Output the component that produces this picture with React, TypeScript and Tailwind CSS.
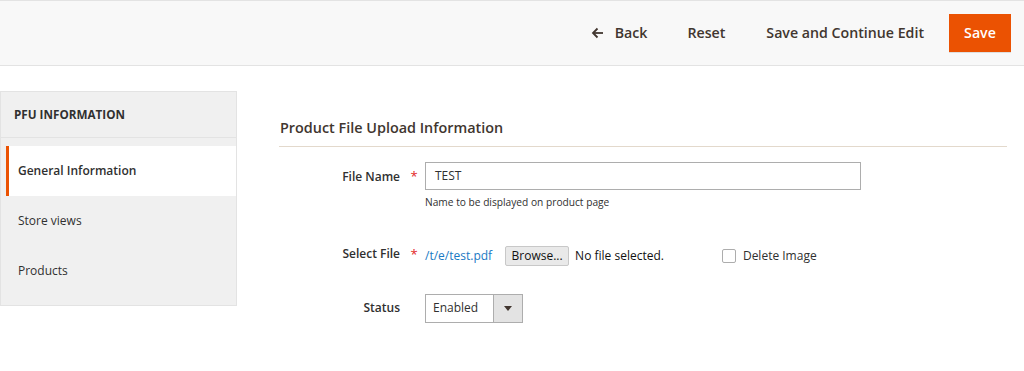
import React from "react";

export default function App() {
  return (
    <div className="w-[1024px] h-[371px] bg-white overflow-hidden text-[#303030]" style={{ fontFamily: '"Open Sans", "Liberation Sans", sans-serif' }}>
      {/* Header */}
      <div className="h-[66px] bg-[#f8f8f8] border-t border-b border-[#e3e3e3] flex items-center justify-end pr-[13px]">
        <button className="flex items-center gap-[11px] text-[14.2px] font-semibold text-[#41362f] mr-[40px]">
          <svg width="13" height="12" viewBox="0 0 13 12" fill="none" stroke="#41362f" strokeWidth="1.8">
            <path d="M12 6H2" />
            <path d="M6.5 1.5L2 6l4.5 4.5" />
          </svg>
          <span>Back</span>
        </button>
        <button className="text-[14.2px] font-semibold text-[#41362f] mr-[41px]">Reset</button>
        <button className="text-[14.2px] font-semibold text-[#41362f] mr-[25px]">Save and Continue Edit</button>
        <button className="h-[38px] w-[62px] bg-[#eb5202] text-white text-[14.2px] font-semibold shadow-[0_1px_0_rgba(0,0,0,0.1)]">Save</button>
      </div>

      <div className="flex items-start pt-[25px]">
        {/* Sidebar */}
        <div className="w-[237px] shrink-0 bg-[#f0f0f0] border border-[#e3e3e3] pb-[10px]">
          <div className="h-[46px] flex items-center pl-[13px] border-b border-[#e3e3e3] text-[11.7px] font-bold text-[#303030]">
            PFU INFORMATION
          </div>
          <div className="pt-[8px] pl-[5px]">
            <div className="h-[50px] bg-white border-l-[3px] border-[#eb5202] flex items-center pl-[9px] text-[12px] font-semibold text-[#303030]">
              General Information
            </div>
            <div className="h-[50px] flex items-center pl-[12px] text-[12px] text-[#303030]">Store views</div>
            <div className="h-[49px] flex items-center pl-[12px] text-[12px] text-[#303030]">Products</div>
          </div>
        </div>

        {/* Content */}
        <div className="flex-1 pl-[42px] pr-[17px] pt-[26px]">
          <div className="pl-[1px] pb-[7px] border-b border-[#e3d9cc] text-[14.4px] font-semibold text-[#41362f]">
            Product File Upload Information
          </div>

          <div className="pt-[15px]">
            {/* File Name */}
            <div className="flex">
              <div className="w-[121px] h-[28px] pt-[3px] flex items-center justify-end text-[12px] font-semibold text-[#303030]">File Name</div>
              <div className="w-[25px] h-[28px] pt-[3px] flex items-center justify-center text-[#e22626] text-[13px] pl-[3px]">*</div>
              <div className="flex flex-col">
                <div className="w-[436px] h-[28px] border border-[#adadad] flex items-center pl-[9px] text-[12px] text-[#303030]">TEST</div>
                <div className="mt-[5px] text-[10.2px] text-[#303030]">Name to be displayed on product page</div>
              </div>
            </div>

            {/* Select File */}
            <div className="flex items-center mt-[32px] h-[28px]">
              <div className="w-[121px] flex items-center justify-end text-[12px] font-semibold text-[#303030] -mt-[3px]">Select File</div>
              <div className="w-[25px] flex items-center justify-center text-[#e22626] text-[13px] pl-[3px] -mt-[3px]">*</div>
              <span className="text-[12px] text-[#1979c3]">/t/e/test.pdf</span>
              <span className="ml-[13px] h-[20px] w-[64px] bg-[#e9e9e9] border border-[#c8c8c8] rounded-[2px] flex items-center justify-center text-[12px] text-[#111]">Browse...</span>
              <span className="ml-[6px] text-[12px] text-[#111]">No file selected.</span>
              <span className="ml-[58px] w-[14px] h-[14px] border border-[#adadad] rounded-[2px] bg-white"></span>
              <span className="ml-[7px] text-[12px] text-[#303030]">Delete Image</span>
            </div>

            {/* Status */}
            <div className="flex items-center mt-[24px]">
              <div className="w-[121px] flex items-center justify-end text-[12px] font-semibold text-[#303030]">Status</div>
              <div className="w-[25px]"></div>
              <div className="w-[98px] h-[29px] border border-[#adadad] flex">
                <div className="flex-1 flex items-center pl-[7px] text-[12px] text-[#303030] bg-white">Enabled</div>
                <div className="w-[29px] bg-[#e3e3e3] border-l border-[#adadad] flex items-center justify-center">
                  <svg width="8" height="5" viewBox="0 0 8 5"><path d="M0 0h8L4 5z" fill="#41362f" /></svg>
                </div>
              </div>
            </div>
          </div>
        </div>
      </div>
    </div>
  );
}
